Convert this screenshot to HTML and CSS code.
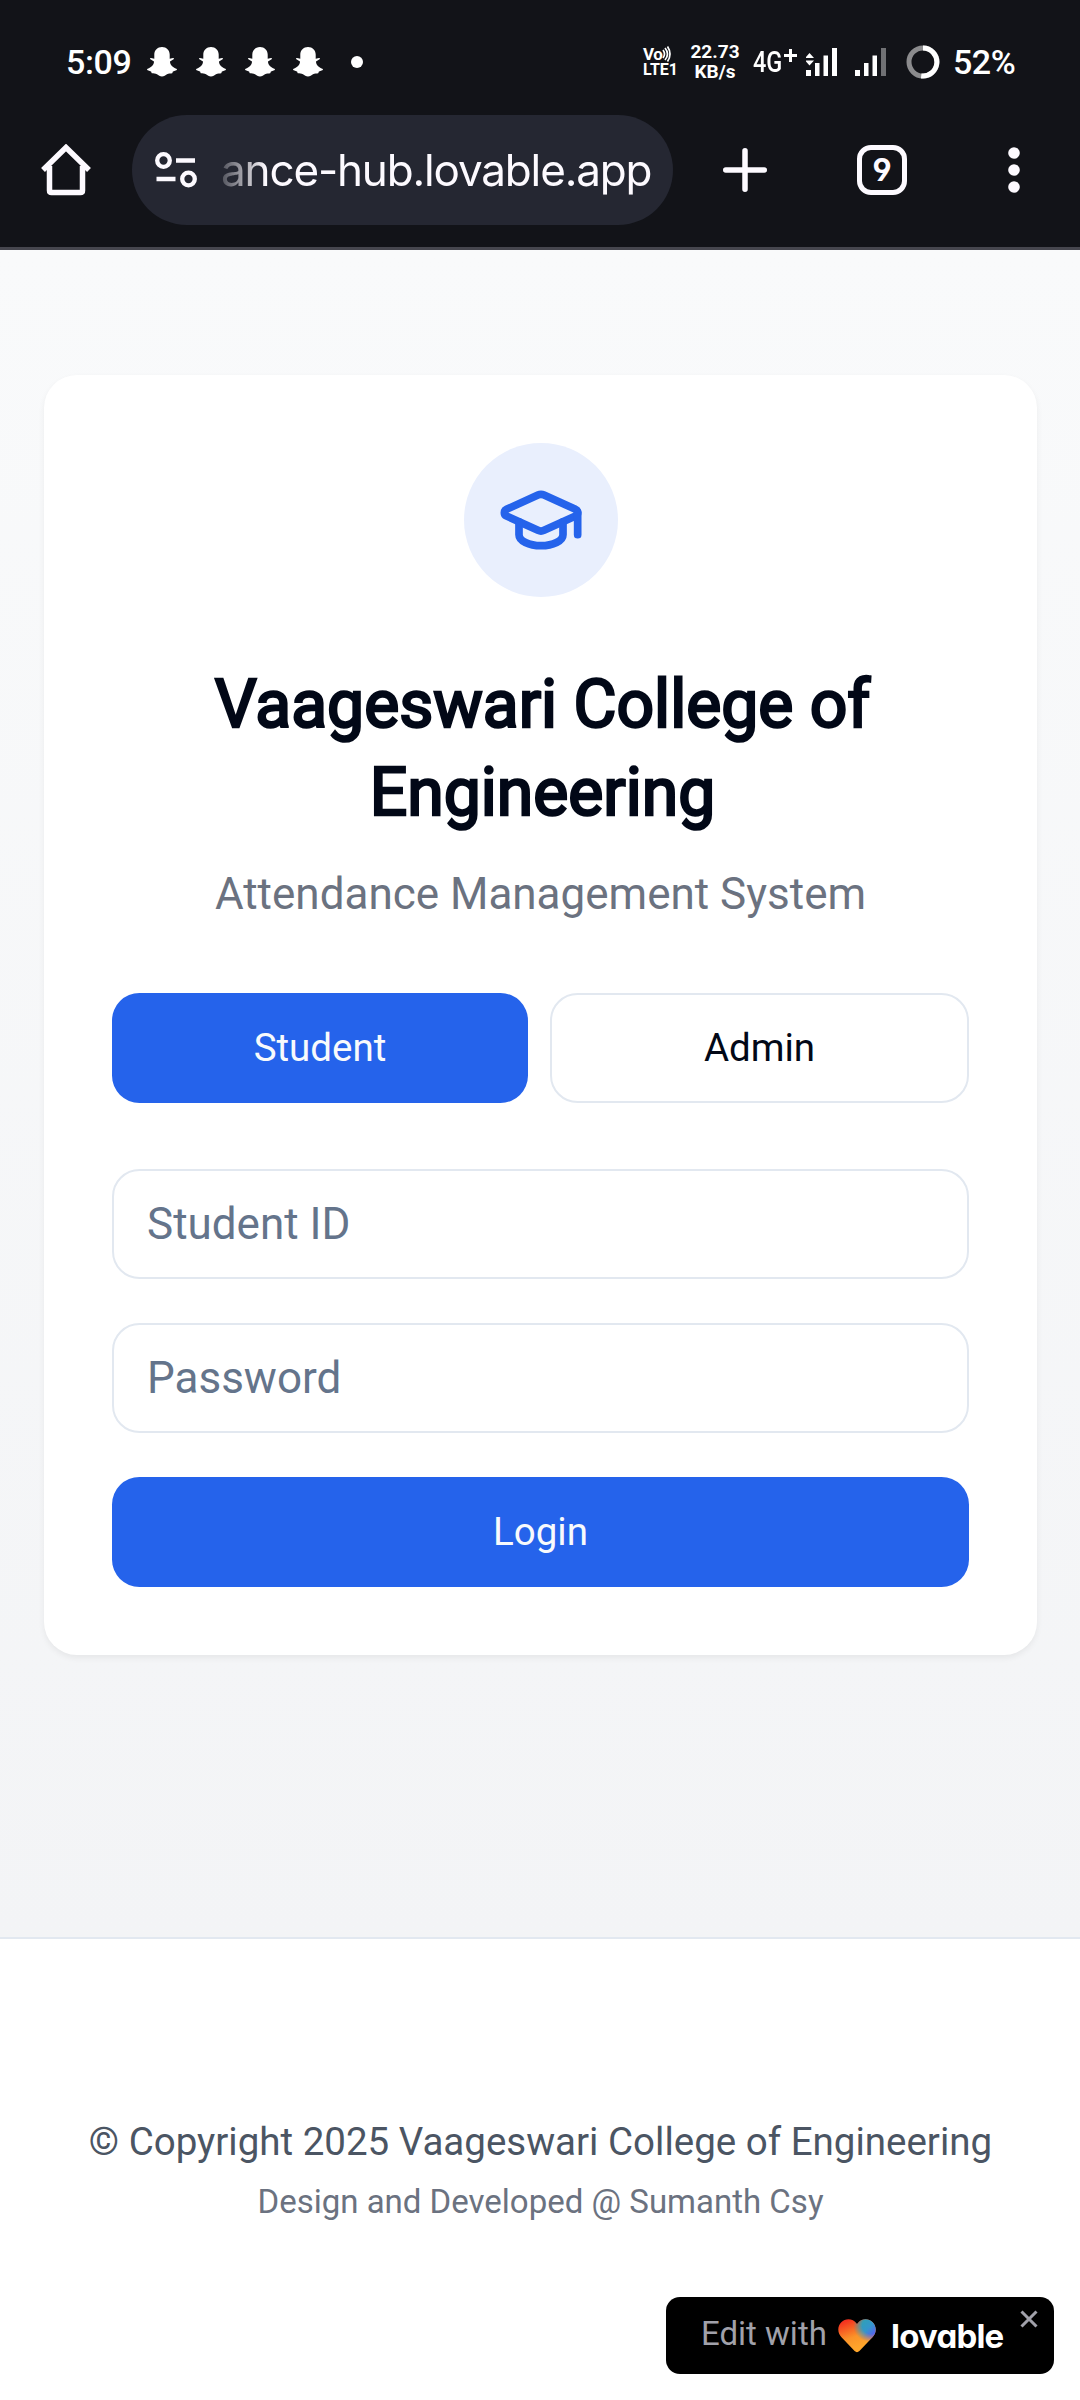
FILE: index.html
```html
<!DOCTYPE html>
<html lang="en">
<head>
<meta charset="utf-8">
<title>Vaageswari College of Engineering</title>
<link rel="stylesheet" href="styles.css">
</head>
<body>
<svg class="defs" width="0" height="0">
  <symbol id="ghost" viewBox="0 0 30 30">
    <path d="M15 0C10.500 0 7.300 3.300 7.300 7.500V11.800l-3.300-.8c-.9-.2-1.400.8-.6 1.300L7 14.500c0 3.500-3 6-6.300 7.300-.9.400-.8 1.100 0 1.500l3.300 1.300c.4.200.3 1.400.8 1.700 1.500.500 3.700-.100 5.200.9 1.500 1 3 2.300 5 2.300s3.500-1.300 5-2.300c1.500-1 3.700-.400 5.200-.9.500-.300.400-1.500.8-1.700l3.300-1.300c.8-.400.9-1.100 0-1.500C26 20.500 23 18 23 14.500l3.600-2.200c.8-.500.300-1.500-.6-1.300l-3.300.8V7.500C22.700 3.300 19.500 0 15 0z" fill="currentColor"/>
  </symbol>
</svg>
<header class="chrome">
  <div class="status">
    <span class="time">5:09</span>
    <div class="notifs">
      <svg class="ghost"><use href="#ghost"/></svg>
      <svg class="ghost"><use href="#ghost"/></svg>
      <svg class="ghost"><use href="#ghost"/></svg>
      <svg class="ghost"><use href="#ghost"/></svg>
      <span class="more-dot"></span>
    </div>
    <div class="volte">
      <span class="vo">Vo<svg width="9" height="16" viewBox="0 0 9 16" fill="none" stroke="currentColor" stroke-width="1.700"><path d="M1 4q3 4 0 8M3 2q5 6 0 12M5.500 .5q5 7.500 0 15"/></svg></span>
      <span class="lte">LTE1</span>
    </div>
    <div class="speed"><span>22.73</span><span>KB/s</span></div>
    <div class="net"><span class="gen">4G</span><svg width="13" height="13" viewBox="0 0 13 13" stroke="currentColor" stroke-width="3"><path d="M6.500 0v13M0 6.500h13"/></svg></div>
    <svg class="bars1" width="31" height="30" viewBox="0 0 31 30" fill="currentColor"><path d="M3.500 6 8 11H-1zM-1 13.500H8L3.500 18.500z"/><path d="M0 23h5v6H0zM9 16h4.500v13H9zM17.500 8.500H22V29h-4.500zM26 1h5v28h-5z"/></svg>
    <svg class="bars2" width="31" height="30" viewBox="0 0 31 30" fill="currentColor"><path d="M0 23h5v6H0zM9 16h4.500v13H9zM17.500 8.500H22V29h-4.500z"/><path d="M26 1h5v28h-5z" opacity=".4"/></svg>
    <svg class="ring" width="34" height="34" viewBox="0 0 34 34" fill="none" stroke-width="5"><circle cx="17" cy="17" r="14" stroke="#8b8b8d"/><path d="M17 3a14 14 0 1 1-1.800 27.900" stroke="#fff"/></svg>
    <span class="pct">52%</span>
  </div>
  <div class="toolbar">
    <svg class="home" width="50" height="52" viewBox="0 0 50 52" fill="none" stroke="currentColor" stroke-width="5.500" stroke-linejoin="round"><path d="M2 26 25 3.500 48 26" stroke-linejoin="miter"/><path d="M8.500 22v24.500q0 2 2 2h29q2 0 2-2V22"/></svg>
    <div class="omnibox">
      <svg width="42" height="36" viewBox="0 0 42 36" fill="none" stroke="currentColor" stroke-width="4.300"><circle cx="8.500" cy="8.500" r="6.300"/><path d="M21 8.500h19M1.500 27h19"/><circle cx="33.500" cy="27" r="6.300"/></svg>
      <span class="url">ance-hub.lovable.app</span>
    </div>
    <svg class="plus-icon" width="44" height="44" viewBox="0 0 44 44" stroke="currentColor" stroke-width="5.500" stroke-linecap="round"><path d="M22 2.750v38.500M2.750 22h38.500"/></svg>
    <span class="tabs">9</span>
    <svg class="menu" width="12" height="46" viewBox="0 0 12 46" fill="currentColor"><circle cx="6" cy="6" r="5.800"/><circle cx="6" cy="23" r="5.800"/><circle cx="6" cy="40" r="5.800"/></svg>
  </div>
</header>
<main class="page">
  <section class="card">
    <div class="badge">
      <svg width="88" height="88" viewBox="0 0 24 24" fill="none" stroke="currentColor" stroke-width="2.100" stroke-linecap="round" stroke-linejoin="round"><path d="M21.420 10.922a1 1 0 0 0-.019-1.838L12.830 5.180a2 2 0 0 0-1.660 0L2.600 9.080a1 1 0 0 0 0 1.832l8.570 3.908a2 2 0 0 0 1.660 0z"/><path d="M22 10v6"/><path d="M6 12.500V16a6 3 0 0 0 12 0v-3.500"/></svg>
    </div>
    <h1 class="title">Vaageswari College of Engineering</h1>
    <p class="subtitle">Attendance Management System</p>
    <div class="roles">
      <button class="btn primary">Student</button>
      <button class="btn outline">Admin</button>
    </div>
    <form class="form">
      <input class="field" type="text" placeholder="Student ID">
      <input class="field" type="password" placeholder="Password">
      <button class="btn primary" type="button">Login</button>
    </form>
  </section>
</main>
<footer class="footer">
  <p class="copyright">© Copyright 2025 Vaageswari College of Engineering</p>
  <p class="credit">Design and Developed @ Sumanth Csy</p>
</footer>
<aside class="lovable">
  <span class="edit">Edit with</span>
  <svg class="heart" width="38" height="34" viewBox="0 0 38 34">
    <defs>
      <linearGradient id="warm" x1=".1" y1=".1" x2=".45" y2=".9"><stop offset="0" stop-color="#f4331f"/><stop offset=".6" stop-color="#fb9329"/><stop offset="1" stop-color="#ffa62b"/></linearGradient>
      <linearGradient id="blues" x1=".6" y1=".1" x2="1" y2=".45"><stop offset="0" stop-color="#2fa0b8"/><stop offset=".5" stop-color="#3496cc"/><stop offset="1" stop-color="#5a5cf0"/></linearGradient>
      <radialGradient id="fade" cx=".88" cy=".2" r=".48"><stop offset="0" stop-color="#fff"/><stop offset=".5" stop-color="#fff"/><stop offset="1" stop-color="#fff" stop-opacity="0"/></radialGradient>
      <mask id="cool"><rect width="38" height="34" fill="url(#fade)"/></mask>
      <path id="heart" d="M19 5C16.500 1.500 13.500.3 10.500.3 5 .3.300 4.800.300 10.500c0 3.200 1.200 5.600 3.200 7.700L16.600 32q2.400 2.300 4.800 0l13.100-13.800c2-2.100 3.200-4.500 3.200-7.700C37.700 4.800 33 .3 27.500.3 24.500.3 21.500 1.500 19 5z"/>
    </defs>
    <use href="#heart" fill="url(#warm)"/>
    <use href="#heart" fill="url(#blues)" mask="url(#cool)"/>
  </svg>
  <span class="wordmark">lovable</span>
  <svg class="close" width="18" height="18" viewBox="0 0 18 18" stroke="currentColor" stroke-width="3"><path d="M1.500 1.500l15 15M16.500 1.500l-15 15"/></svg>
</aside>
</body>
</html>
```
FILE: styles.css
```css
* { box-sizing: border-box; }
body {
  margin: 0;
  width: 1080px;
  height: 2400px;
  display: flex;
  flex-direction: column;
  font-family: Roboto, sans-serif;
  background: #fff;
  overflow: hidden;
}
svg { display: block; flex: none; }
.defs { position: absolute; }
h1, p { margin: 0; }

.chrome {
  height: 250px;
  flex: none;
  background: #121318;
  color: #fdfaff;
  border-bottom: 3px solid #46464e;
}
.status {
  height: 115px;
  padding: 8px 0 0 66px;
  display: flex;
  align-items: center;
  color: #fff;
}
.time { font-size: 34px; font-weight: 500; width: 81px; letter-spacing: -.4px; }
.notifs { display: flex; align-items: center; gap: 18.800px; width: 496px; }
.ghost { width: 30px; height: 30px; }
.more-dot { width: 12px; height: 12px; border-radius: 50%; background: #fff; margin-left: 9px; }
.volte { width: 47px; font-weight: 700; line-height: 15px; }
.vo { display: flex; align-items: center; font-size: 16px; letter-spacing: -.5px; font-size: 17px; }
.lte { display: block; font-size: 16px; }
.speed {
  width: 50px;
  display: flex;
  flex-direction: column;
  align-items: center;
  font-size: 19px;
  font-weight: 700;
  line-height: 20px;
}
.net { margin-left: 13px; width: 53px; display: flex; }
.gen { width: 31px; font-size: 29px; font-weight: 500; line-height: 34px; transform: scaleX(.81); transform-origin: left; }
.net svg { margin-top: 4px; }
.bars2 { margin-left: 18px; }
.ring { margin-left: 20px; }
.pct { margin-left: 13px; font-size: 34px; font-weight: 500; letter-spacing: -.5px; }

.toolbar { height: 110px; display: flex; align-items: center; padding-left: 41px; }
.omnibox {
  margin-left: 41px;
  width: 541px;
  flex: none;
  height: 110px;
  border-radius: 55px;
  background: #252732;
  display: flex;
  align-items: center;
  padding-left: 23px;
  gap: 24px;
}
.url {
  font-family: Inter, sans-serif;
  font-size: 44px;
  letter-spacing: -1.150px;
  white-space: nowrap;
  -webkit-mask-image: linear-gradient(90deg, rgba(0,0,0,.2), #000 45px);
  mask-image: linear-gradient(90deg, rgba(0,0,0,.2), #000 45px);
}
.plus-icon { margin-left: 50px; }
.tabs {
  margin-left: 90px;
  width: 50px;
  height: 50px;
  border: 5.500px solid currentColor;
  border-radius: 14px;
  font: 700 31px/40px Inter, sans-serif;
  font-feature-settings: "cv04";
  text-align: center;
}
.menu { margin-left: 101px; }

.page {
  height: 1687px;
  flex: none;
  padding: 125px 43px 0 44px;
  background: linear-gradient(#f9fafb, #f3f4f6);
}
.card {
  height: 1280px;
  padding: 68px;
  border-radius: 33px;
  background: #fff;
  box-shadow: 0 3px 6px rgba(0,0,0,.06);
  display: flex;
  flex-direction: column;
}
.badge {
  width: 154px;
  height: 154px;
  border-radius: 50%;
  background: #e9effd;
  color: #2563eb;
  display: grid;
  place-items: center;
  align-self: center;
}
.title {
  margin: 64px -12px 0 -9px;
  padding-left: 1px;
  font-size: 66px;
  font-weight: 400;
  line-height: 88px;
  text-align: center;
  color: #020817;
  -webkit-text-stroke: 2.500px #020817;
}
.subtitle { margin-top: 24px; font-size: 44px; line-height: 66px; text-align: center; color: #6b7280; }
.roles { margin-top: 66px; display: grid; grid-template-columns: 416px 1fr; gap: 22px; }
.btn {
  height: 110px;
  padding: 0 6px 2px;
  border: 0;
  border-radius: 27.500px;
  font: 400 38.500px Roboto, sans-serif;
}
.primary { background: #2563eb; color: #f8fafc; }
.outline { background: #fff; border: 2px solid #e2e8f0; color: #020817; }
.form { margin-top: 66px; display: flex; flex-direction: column; gap: 44px; }
.field {
  height: 110px;
  border: 2px solid #e2e8f0;
  border-radius: 27.500px;
  padding: 0 33px;
  font: 44px Roboto, sans-serif;
  background: #fff;
}
.field::placeholder { color: #64748b; opacity: 1; }

.footer {
  flex: 1;
  border-top: 2px solid #e2e8f0;
  padding: 175px 0 0 1px;
  text-align: center;
}
.copyright { font-size: 38.500px; line-height: 55px; color: #4b5563; }
.credit { margin-top: 11px; font-size: 33px; line-height: 44px; color: #6b7280; }

.lovable {
  position: absolute;
  left: 666px;
  top: 2297px;
  width: 388px;
  height: 77px;
  border-radius: 14px;
  background: #000;
  display: flex;
  align-items: center;
  padding-left: 35px;
}
.edit { width: 137px; font-size: 33px; color: #a1a1aa; white-space: nowrap; margin-top: -4px; }
.wordmark {
  margin-left: 15px;
  font-family: Inter, sans-serif;
  font-size: 33px;
  font-weight: 700;
  font-feature-settings: "cv11";
  letter-spacing: -.800px;
  color: #fff;
}
.close { position: absolute; left: 354px; top: 13px; color: #a1a1aa; }
```
